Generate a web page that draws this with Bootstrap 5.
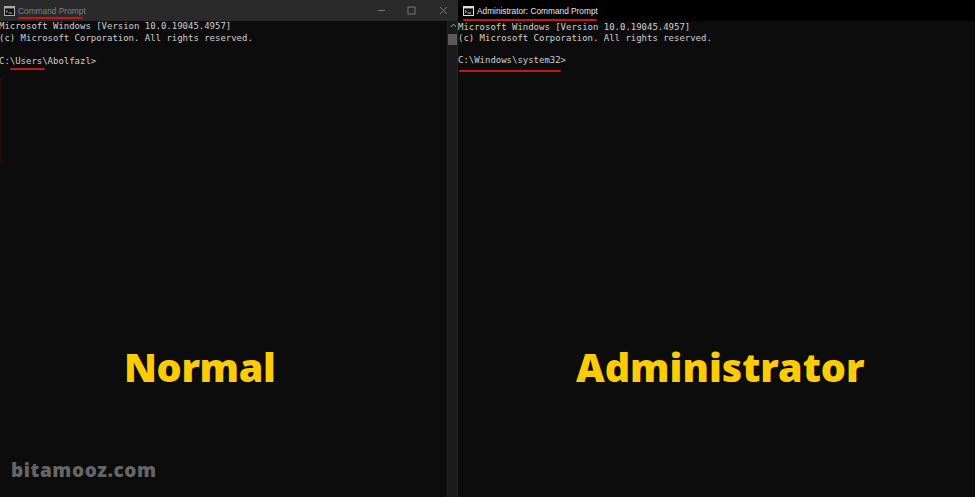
<!doctype html>
<html lang="en">
<head>
<meta charset="utf-8">
<title>Normal vs Administrator Command Prompt</title>
<link href="https://cdn.jsdelivr.net/npm/bootstrap@5.3.0/dist/css/bootstrap.min.css" rel="stylesheet">
<style>
html,body{height:497px;overflow:hidden;background:#0c0c0c}
.shot{width:975px;height:497px;position:relative;background:#0c0c0c}
.pane-l{width:458px}
.pane-r{width:517px}
.conbody{flex:1;min-height:0}
.gutter{width:11px;flex:none;background:#1a1a1a;border-left:1px solid #222;border-right:1px solid #262626;position:relative}
.tbar{height:21px;flex:none}
.tbar-l{background:#2a2a2a}
.tbar-r{background:#000}
.ttl{font:400 8.35px/22px "Liberation Sans",sans-serif;white-space:nowrap}
.ttl-l{color:#808080;margin-left:3px}
.ttl-r{color:#e8e8e8;margin-left:3px;font-size:8.3px}
.cico{display:block;flex:none;margin-left:4px}
.ico-r{margin-left:5px}
.wctl{margin-left:auto;padding-right:10px}
.wgap{margin-right:21px}
.wgap2{margin-right:23px}
.cons{font:400 8.98px/11.5px "DejaVu Sans Mono",monospace;color:#cfcfcf;white-space:pre;margin:0}
.cons-l{margin-left:-1px;flex:1;min-width:0}
.cons-r{line-height:11px;padding-top:.5px}
.biglab{font:900 39.5px/46px "Noto Sans",sans-serif;color:#fdcc07;text-align:center;margin:0;position:absolute;top:344px;white-space:nowrap}
.lab-n{left:124px;letter-spacing:-.35px}
.lab-a{left:576px}
.mark-w{font:900 19px/24px "Noto Sans",sans-serif;color:#666;position:absolute;left:11px;top:458px;letter-spacing:.6px}
.rl{position:absolute;height:2px;background:#c5161a;border-radius:1px}
.r1{left:18px;top:17px;width:65px}
.r2{left:10px;top:68px;width:35px}
.r3{left:463px;top:19px;width:134px}
.r4{left:459px;top:70px;width:102px}
.sb-up{position:absolute;left:2px;top:2px}
.sb-th{position:absolute;left:0;top:13px;width:9px;height:11px;background:#5a5a5a}
.edge{position:absolute;left:0;top:78px;width:1px;height:85px;background:#2a0d10}
</style>
</head>
<body>
<div class="shot d-flex">
  <section class="pane-l d-flex flex-column">
    <div class="tbar tbar-l d-flex align-items-center">
      <svg class="cico" width="11" height="10" viewBox="0 0 11 10"><rect x=".5" y=".5" width="10" height="9" fill="#111" stroke="#aaa"/><rect x="1" y="1" width="9" height="1.4" fill="#aaa"/><path d="M2 4.5l1.5 1L2 6.5M4.5 7H8" stroke="#ccc" fill="none" stroke-width=".8"/></svg>
      <span class="ttl ttl-l">Command Prompt</span>
      <div class="wctl d-flex align-items-center">
        <svg class="wgap" width="9" height="9" viewBox="0 0 9 9"><path d="M1 4.5h7" stroke="#777"/></svg>
        <svg class="wgap2" width="9" height="9" viewBox="0 0 9 9"><rect x="1" y="1" width="7" height="7" fill="none" stroke="#777"/></svg>
        <svg width="9" height="9" viewBox="0 0 9 9"><path d="M1 1l7 7M8 1L1 8" stroke="#777"/></svg>
      </div>
    </div>
    <div class="conbody d-flex">
      <pre class="cons cons-l">Microsoft Windows [Version 10.0.19045.4957]
(c) Microsoft Corporation. All rights reserved.

C:\Users\Abolfazl&gt;</pre>
      <div class="gutter">
        <svg class="sb-up" width="7" height="5" viewBox="0 0 7 5"><path d="M1 4l2.5-3L6 4" fill="none" stroke="#999"/></svg>
        <div class="sb-th"></div>
      </div>
    </div>
  </section>
  <section class="pane-r d-flex flex-column">
    <div class="tbar tbar-r d-flex align-items-center">
      <svg class="cico ico-r" width="11" height="10" viewBox="0 0 11 10"><rect x=".5" y=".5" width="10" height="9" fill="#111" stroke="#ddd"/><rect x="1" y="1" width="9" height="1.4" fill="#ddd"/><path d="M2 4.5l1.5 1L2 6.5M4.5 7H8" stroke="#eee" fill="none" stroke-width=".8"/></svg>
      <span class="ttl ttl-r">Administrator: Command Prompt</span>
    </div>
    <pre class="cons cons-r">Microsoft Windows [Version 10.0.19045.4957]
(c) Microsoft Corporation. All rights reserved.

C:\Windows\system32&gt;</pre>
  </section>
  <div class="edge"></div>
  <div class="rl r1"></div><div class="rl r2"></div><div class="rl r3"></div><div class="rl r4"></div>
  <h2 class="biglab lab-n">Normal</h2>
  <h2 class="biglab lab-a">Administrator</h2>
  <div class="mark-w">bitamooz.com</div>
</div>
<script src="https://cdn.jsdelivr.net/npm/bootstrap@5.3.0/dist/js/bootstrap.bundle.min.js"></script>
</body>
</html>
